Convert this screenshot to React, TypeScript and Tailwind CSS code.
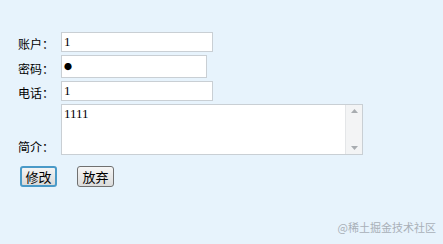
export default function App() {
  const font = { fontFamily: '"Noto Sans CJK SC", "Liberation Serif", serif' }
  const serif = { fontFamily: '"Liberation Serif", serif' }
  return (
    <div className="w-[443px] h-[244px] bg-[#e7f3fc] relative overflow-hidden" style={font}>
      <div className="pt-[32px] pl-[18px] flex flex-col gap-[3px] text-[12px] text-black">
        <div className="flex items-end">
          <span className="w-[43px] leading-[16px]">账户：</span>
          <input
            defaultValue="1"
            className="w-[152px] h-[20px] bg-white border border-[#c9cfd4] px-[2px] text-[13px] outline-none"
            style={serif}
          />
        </div>
        <div className="flex items-end">
          <span className="w-[43px] leading-[18px]">密码：</span>
          <div className="w-[146px] h-[23px] bg-white border border-[#c9cfd4] px-[2px] flex items-center text-[8px]">
            ●
          </div>
        </div>
        <div className="flex items-end">
          <span className="w-[43px] leading-[16px]">电话：</span>
          <input
            defaultValue="1"
            className="w-[152px] h-[20px] bg-white border border-[#c9cfd4] px-[2px] text-[13px] outline-none"
            style={serif}
          />
        </div>
        <div className="flex items-end">
          <span className="w-[43px] leading-[16px]">简介：</span>
          <div className="w-[302px] h-[51px] bg-white border border-[#c9cfd4] flex">
            <div className="flex-1 px-[2px] pt-[1px] text-[13px] leading-[15px]" style={serif}>
              1111
            </div>
            <div className="w-[17px] bg-[#f3f4f5] border-l border-[#e4e6e8] flex flex-col justify-between items-center py-[4px]">
              <svg width="7" height="4" viewBox="0 0 7 4">
                <path d="M0 4 L3.5 0 L7 4 Z" fill="#a8acb0" />
              </svg>
              <svg width="7" height="4" viewBox="0 0 7 4">
                <path d="M0 0 L3.5 4 L7 0 Z" fill="#a8acb0" />
              </svg>
            </div>
          </div>
        </div>
        <div className="flex items-center gap-[20px] mt-[8px] pl-[2px]">
          <button className="w-[37px] h-[21px] text-[13px] leading-none bg-gradient-to-b from-[#f4f4f4] to-[#d9d9d9] border-2 border-[#4a9ac8] rounded-[3px]">
            修改
          </button>
          <button className="w-[37px] h-[21px] text-[13px] leading-none bg-gradient-to-b from-[#f6f6f6] to-[#dcdcdc] border border-[#707070] rounded-[3px]">
            放弃
          </button>
        </div>
      </div>
      <div className="absolute right-[7px] bottom-[9px] text-[11px] text-[#a9b0b8]">@稀土掘金技术社区</div>
    </div>
  )
}
